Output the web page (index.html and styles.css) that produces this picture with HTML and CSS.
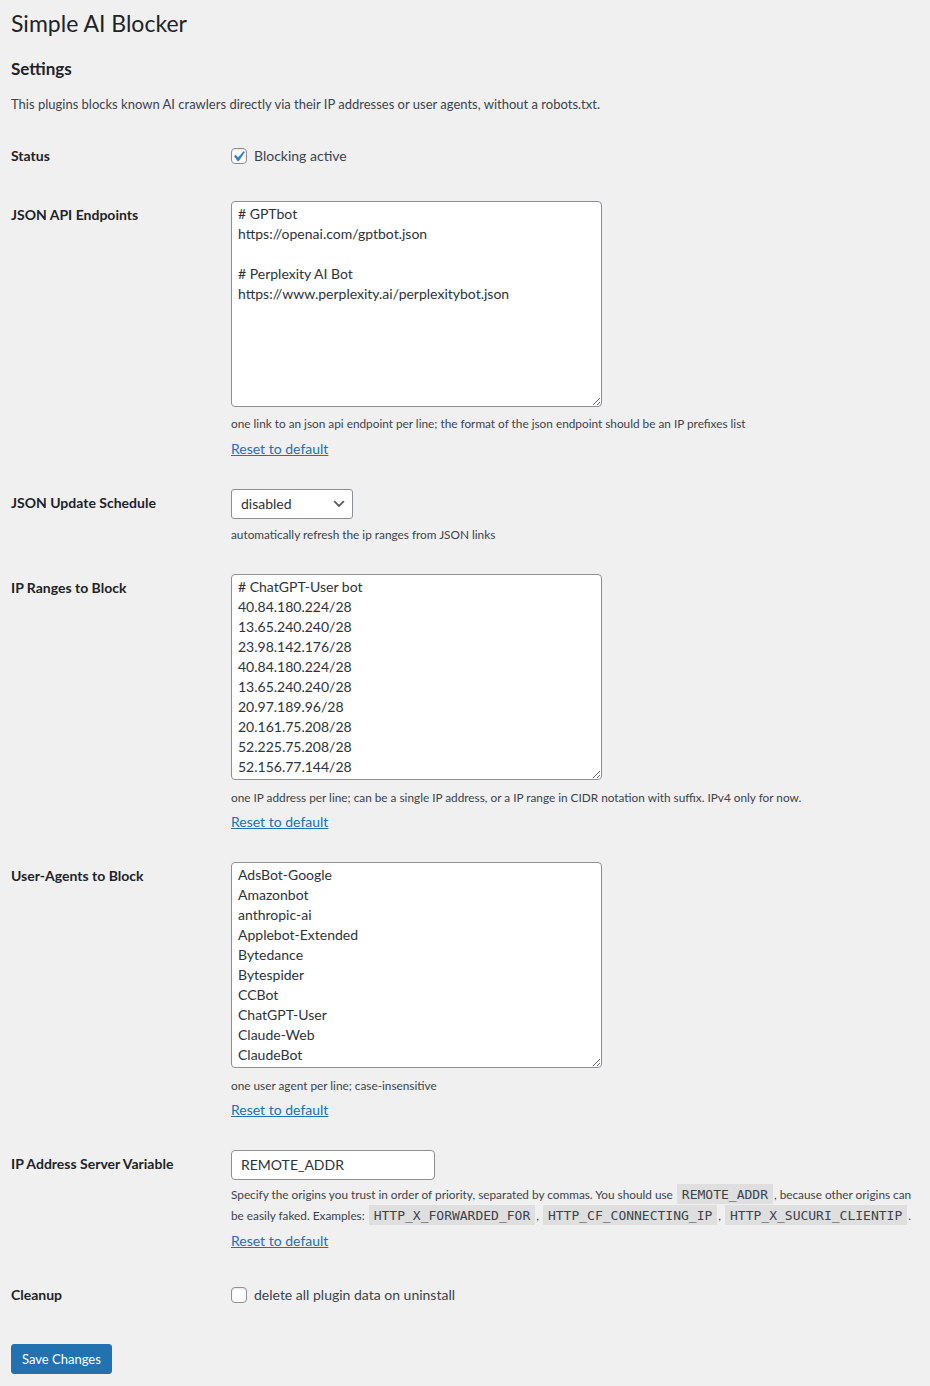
FILE: index.html
```html
<!DOCTYPE html>
<html lang="en">
<head>
<meta charset="utf-8">
<title>Simple AI Blocker</title>
<link rel="stylesheet" href="styles.css">
</head>
<body>
<div class="wrap">
  <h1 class="page-title">Simple AI Blocker</h1>
  <h2 class="section-title">Settings</h2>
  <p class="intro">This plugins blocks known AI crawlers directly via their IP addresses or user agents, without a robots.txt.</p>

  <div class="form-table">
    <div class="row">
      <div class="th">Status</div>
      <div class="td td-center">
        <label class="check-label"><span class="checkbox checked"><svg viewBox="3.81 2.86 13.33 13.33" width="14" height="14"><path d="M14.83 4.89l1.34.94-5.81 8.38H9.02L5.78 9.67l1.34-1.25 2.57 2.4z" fill="#3582c4"/></svg></span>Blocking active</label>
      </div>
    </div>

    <div class="row">
      <div class="th">JSON API Endpoints</div>
      <div class="td">
        <textarea class="field-area" spellcheck="false"># GPTbot
https://openai.com/gptbot.json

# Perplexity AI Bot
https://www.perplexity.ai/perplexitybot.json</textarea>
        <p class="description desc-after-area">one link to an json api endpoint per line; the format of the json endpoint should be an IP prefixes list</p>
        <p class="reset"><a href="#">Reset to default</a></p>
      </div>
    </div>

    <div class="row">
      <div class="th">JSON Update Schedule</div>
      <div class="td">
        <div class="select"><span>disabled</span><svg width="16" height="16" viewBox="0 0 20 20"><path d="M5 6l5 5 5-5 2 1-7 7-7-7 2-1z" fill="#555"/></svg></div>
        <p class="description desc-after-select">automatically refresh the ip ranges from JSON links</p>
      </div>
    </div>

    <div class="row">
      <div class="th">IP Ranges to Block</div>
      <div class="td">
        <textarea class="field-area" spellcheck="false"># ChatGPT-User bot
40.84.180.224/28
13.65.240.240/28
23.98.142.176/28
40.84.180.224/28
13.65.240.240/28
20.97.189.96/28
20.161.75.208/28
52.225.75.208/28
52.156.77.144/28</textarea>
        <p class="description desc-after-area">one IP address per line; can be a single IP address, or a IP range in CIDR notation with suffix. IPv4 only for now.</p>
        <p class="reset"><a href="#">Reset to default</a></p>
      </div>
    </div>

    <div class="row">
      <div class="th">User-Agents to Block</div>
      <div class="td">
        <textarea class="field-area" spellcheck="false">AdsBot-Google
Amazonbot
anthropic-ai
Applebot-Extended
Bytedance
Bytespider
CCBot
ChatGPT-User
Claude-Web
ClaudeBot</textarea>
        <p class="description desc-after-area">one user agent per line; case-insensitive</p>
        <p class="reset"><a href="#">Reset to default</a></p>
      </div>
    </div>

    <div class="row">
      <div class="th">IP Address Server Variable</div>
      <div class="td">
        <div class="text-input">REMOTE_ADDR</div>
        <p class="description desc-code">Specify the origins you trust in order of priority, separated by commas. You should use <code>REMOTE_ADDR</code>, because other origins can be easily faked. Examples: <code>HTTP_X_FORWARDED_FOR</code>, <code>HTTP_CF_CONNECTING_IP</code>, <code>HTTP_X_SUCURI_CLIENTIP</code>.</p>
        <p class="reset"><a href="#">Reset to default</a></p>
      </div>
    </div>

    <div class="row">
      <div class="th">Cleanup</div>
      <div class="td td-center">
        <label class="check-label"><span class="checkbox"></span>delete all plugin data on uninstall</label>
      </div>
    </div>
  </div>

  <div class="submit">
    <button class="button-primary" type="button">Save Changes</button>
  </div>
</div>
</body>
</html>
```

FILE: styles.css
```css
html, body {
  margin: 0;
  padding: 0;
  background: #f0f0f1;
}

body {
  color: #3c434a;
  font-family: "Lato", "Liberation Sans", sans-serif;
  font-size: 13px;
  line-height: 1.4;
}

.wrap {
  padding: 0 4px 0 11px;
}

.page-title {
  margin: 0;
  padding: 9px 0 4px;
  font-size: 23px;
  font-weight: 400;
  line-height: 1.3;
  color: #1d2327;
}

.section-title {
  margin: 16px 0 16px;
  font-size: 17px;
  font-weight: 700;
  line-height: 20px;
  color: #1d2327;
}

.intro {
  margin: 0 0 13px;
  font-size: 13px;
  line-height: 1.5;
}

.form-table {
  display: flex;
  flex-direction: column;
}

.row {
  display: flex;
  align-items: flex-start;
}

.th {
  box-sizing: border-box;
  flex: 0 0 210px;
  width: 210px;
  padding: 20px 10px 20px 0;
  font-size: 14px;
  font-weight: 700;
  line-height: 18.2px;
  color: #1d2327;
}

.td {
  flex: 1 1 auto;
  min-width: 0;
  display: flex;
  flex-direction: column;
  align-items: flex-start;
  padding: 15px 10px;
  font-size: 14px;
  line-height: 1.3;
}

.td-center {
  align-self: center;
}

.check-label {
  display: flex;
  align-items: center;
  font-size: 14px;
  color: #3c434a;
}

.checkbox {
  box-sizing: border-box;
  display: flex;
  width: 16px;
  height: 16px;
  margin-right: 7px;
  border: 1px solid #8c8f94;
  border-radius: 4px;
  background: #fff;
  box-shadow: inset 0 1px 2px rgba(0, 0, 0, .1);
}

.checkbox svg {
  display: block;
  overflow: visible;
}

.field-area {
  display: block;
  box-sizing: border-box;
  width: 371px;
  height: 206px;
  margin: 0;
  padding: 2px 6px;
  border: 1px solid #8c8f94;
  border-radius: 4px;
  background: #fff;
  color: #2c3338;
  font-family: "Lato", "Liberation Sans", sans-serif;
  font-size: 14px;
  line-height: 20px;
  resize: both;
  overflow: auto;
}

.select {
  box-sizing: border-box;
  display: flex;
  align-items: center;
  width: 122px;
  height: 30px;
  margin: 0;
  padding: 0 5px 0 9px;
  border: 1px solid #8c8f94;
  border-radius: 3px;
  background: #fff;
  color: #2c3338;
  font-size: 14px;
}

.select svg {
  margin-left: auto;
  margin-top: 1px;
}

.text-input {
  box-sizing: border-box;
  display: flex;
  align-items: center;
  width: 204px;
  height: 30px;
  padding: 0 9px;
  border: 1px solid #8c8f94;
  border-radius: 4px;
  background: #fff;
  color: #2c3338;
  font-size: 14px;
}

.description {
  margin: 4px 0 0;
  font-size: 11.8px;
  line-height: 19.5px;
  color: #3c434a;
}

.desc-after-area {
  margin-top: 7.5px;
}

.desc-after-select {
  margin-top: 6px;
}

.desc-code {
  line-height: 21px;
}

code {
  padding: 3px 5px 2px;
  margin: 0 1px;
  background: rgba(0, 0, 0, .07);
  font-family: "DejaVu Sans Mono", "Liberation Mono", monospace;
  font-size: 13px;
  color: #3c434a;
}

.reset {
  margin: 4px 0 0;
  font-size: 14px;
  line-height: 21px;
}

.reset a {
  color: #2271b1;
  text-decoration: underline;
}

.submit {
  margin-top: 20px;
}

.button-primary {
  box-sizing: border-box;
  height: 30px;
  padding: 0 10px;
  border: 1px solid #2271b1;
  border-radius: 3px;
  background: #2271b1;
  color: #fff;
  font-family: "Lato", "Liberation Sans", sans-serif;
  font-size: 13px;
  line-height: 28px;
  cursor: pointer;
}
```
